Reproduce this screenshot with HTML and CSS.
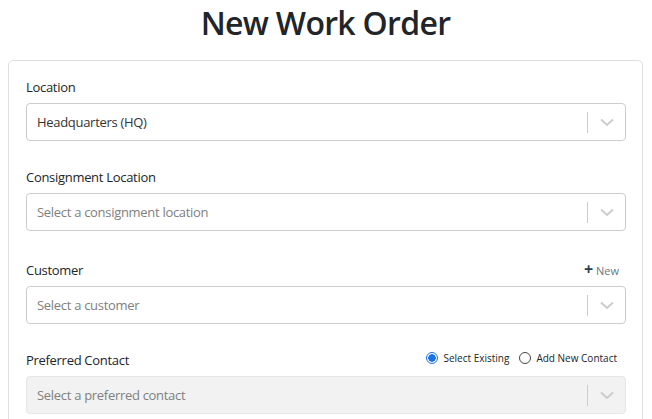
FILE: index.html
```html
<!DOCTYPE html>
<html lang="en">
<head>
  <meta charset="UTF-8">
  <meta name="viewport" content="width=device-width, initial-scale=1.0">
  <title>New Work Order</title>
  <link rel="stylesheet" href="styles.css">
</head>
<body>
  <h1 class="page-title">New Work Order</h1>

  <div class="card">
    <div class="field">
      <div class="field-head">
        <label>Location</label>
      </div>
      <div class="select">
        <span class="select-value">Headquarters (HQ)</span>
        <span class="select-sep"></span>
        <span class="select-arrow">
          <svg width="20" height="20" viewBox="0 0 20 20"><path d="M4 7.5 L10 13 L16 7.5" fill="none" stroke="currentColor" stroke-width="2"/></svg>
        </span>
      </div>
    </div>

    <div class="field">
      <div class="field-head">
        <label>Consignment Location</label>
      </div>
      <div class="select">
        <span class="select-placeholder">Select a consignment location</span>
        <span class="select-sep"></span>
        <span class="select-arrow">
          <svg width="20" height="20" viewBox="0 0 20 20"><path d="M4 7.5 L10 13 L16 7.5" fill="none" stroke="currentColor" stroke-width="2"/></svg>
        </span>
      </div>
    </div>

    <div class="field customer">
      <div class="field-head">
        <label>Customer</label>
        <a class="add-new" href="#"><span class="plus">+</span> New</a>
      </div>
      <div class="select">
        <span class="select-placeholder">Select a customer</span>
        <span class="select-sep"></span>
        <span class="select-arrow">
          <svg width="20" height="20" viewBox="0 0 20 20"><path d="M4 7.5 L10 13 L16 7.5" fill="none" stroke="currentColor" stroke-width="2"/></svg>
        </span>
      </div>
    </div>

    <div class="field">
      <div class="field-head">
        <label>Preferred Contact</label>
        <div class="radios">
          <span class="radio checked"></span><span class="radio-label">Select Existing</span>
          <span class="radio"></span><span class="radio-label">Add New Contact</span>
        </div>
      </div>
      <div class="select disabled">
        <span class="select-placeholder">Select a preferred contact</span>
        <span class="select-sep"></span>
        <span class="select-arrow">
          <svg width="20" height="20" viewBox="0 0 20 20"><path d="M4 7.5 L10 13 L16 7.5" fill="none" stroke="currentColor" stroke-width="2"/></svg>
        </span>
      </div>
    </div>
  </div>
</body>
</html>
```

FILE: styles.css
```css
/* Work order form */
body {
  font-family: 'Open Sans', sans-serif;
  margin: 0;
  padding: 0 9px 0 8px;
  background-color: #ffffff;
  color: #212529;
}

.page-title {
  margin: 0;
  height: 60px;
  line-height: 46px;
  text-align: center;
  font-size: 32px;
  font-weight: 600;
  letter-spacing: -0.7px;
  color: #212529;
}

.card {
  border: 1px solid #dfdfdf;
  border-radius: 5px;
  padding: 16px 16px 0 17px;
}

.field {
  margin-bottom: 26px;
}

.field.customer {
  margin-top: 29px;
}

.field-head {
  display: flex;
  justify-content: space-between;
  align-items: center;
  height: 20px;
  margin-bottom: 6px;
  letter-spacing: -0.3px;
}

label {
  font-size: 13px;
  color: #212529;
}

.add-new {
  font-size: 11px;
  color: #6c757d;
  text-decoration: none;
  margin-right: 7px;
  margin-top: -2px;
  letter-spacing: 0;
}

.add-new .plus {
  color: #2c3e50;
  font-size: 16px;
  font-weight: 700;
}

.select {
  display: flex;
  align-items: center;
  height: 36px;
  border: 1px solid #cccccc;
  border-radius: 4px;
  background: #ffffff;
  letter-spacing: -0.3px;
}

.select.disabled {
  background: #f2f2f2;
  border-color: #e6e6e6;
}

.select-value,
.select-placeholder {
  flex: 1;
  padding-left: 10px;
  font-size: 13px;
}

.select-value {
  color: #333333;
}

.select-placeholder {
  color: #808080;
}

.select-sep {
  width: 1px;
  height: 21px;
  background: #cccccc;
}

.select-arrow {
  width: 37px;
  display: flex;
  justify-content: center;
  color: #cccccc;
}

.radios {
  display: flex;
  align-items: center;
  font-size: 10px;
  letter-spacing: 0;
  margin-right: 9px;
  margin-top: -5px;
}

.radio {
  width: 12px;
  height: 12px;
  border: 1px solid #444444;
  border-radius: 50%;
  margin-right: 5px;
  box-sizing: border-box;
}

.radio.checked {
  border-color: #1a73e8;
  background: radial-gradient(circle, #1a73e8 0 3.5px, #ffffff 4px);
}

.radio-label {
  margin-right: 10px;
  color: #212529;
}

.radio-label:last-child {
  margin-right: 0;
}
```
